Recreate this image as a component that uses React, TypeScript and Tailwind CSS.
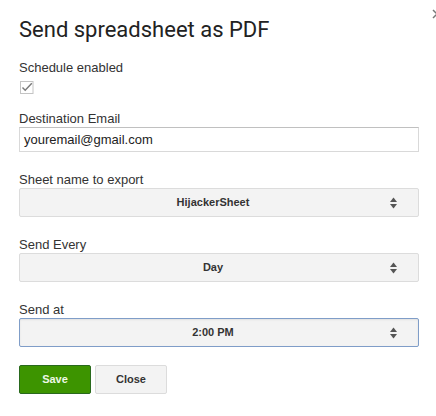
import React from "react";

function Arrows() {
  return (
    <svg width="7" height="12" viewBox="0 0 7 12" className="absolute right-[21px] top-1/2 -translate-y-1/2">
      <path d="M3.5 0.5 L7 5 L0 5 Z" fill="#555" />
      <path d="M0 7 L7 7 L3.5 11.5 Z" fill="#555" />
    </svg>
  );
}

function Select({ value, focused }: { value: string; focused?: boolean }) {
  return (
    <div
      className={
        focused
          ? "relative flex h-[29px] w-[400px] items-center justify-center rounded-[2px] border border-[#7f9dc8] bg-[#f3f3f3] pr-[12px] text-[11px] font-bold text-[#333] shadow-[inset_0_1px_2px_rgba(0,0,0,0.08)]"
          : "relative flex h-[29px] w-[400px] items-center justify-center rounded-[2px] border border-[#dcdcdc] bg-[#f3f3f3] pr-[12px] text-[11px] font-bold text-[#333]"
      }
    >
      <span>{value}</span>
      <Arrows />
    </div>
  );
}

export default function App() {
  return (
    <div className="relative h-[416px] w-[436px] overflow-hidden bg-white pl-[19px] pt-[17px] font-['Liberation_Sans',Arial,sans-serif] text-[13px] text-[#333]">
      <h1 className="font-['Roboto',Arial,sans-serif] text-[22px] font-normal leading-[26px] text-[#222]">
        Send spreadsheet as PDF
      </h1>

      <div className="mt-[17px] leading-[15px]">Schedule enabled</div>
      <div className="ml-[1px] mt-[6px] h-[12px] w-[14px]">
        <svg width="14" height="13" viewBox="0 0 14 13">
          <rect x="0.5" y="0.5" width="12.5" height="12" fill="#fff" stroke="#c4c4c4" />
          <path d="M2.5 6.5 L5.2 9.3 L11.8 2.2" fill="none" stroke="#7a7a7a" strokeWidth="1.4" />
        </svg>
      </div>

      <div className="mt-[18px] leading-[15px]">Destination Email</div>
      <div className="mt-[1px] flex h-[25px] w-[400px] items-center border border-[#d9d9d9] border-t-[#c0c0c0] pl-[4px] text-[13px] text-[#222]">
        youremail@gmail.com
      </div>

      <div className="mt-[20px] leading-[15px]">Sheet name to export</div>
      <div className="mt-[1px]">
        <Select value="HijackerSheet" />
      </div>

      <div className="mt-[20px] leading-[15px]">Send Every</div>
      <div className="mt-[1px]">
        <Select value="Day" />
      </div>

      <div className="mt-[20px] leading-[15px]">Send at</div>
      <div className="mt-[1px]">
        <Select value="2:00 PM" focused />
      </div>

      <div className="mt-[18px] flex gap-[4px]">
        <button className="h-[29px] w-[72px] rounded-[2px] border border-[#29691d] bg-[#3d9400] text-[11px] font-bold text-[#eef8e6]">
          Save
        </button>
        <button className="h-[29px] w-[72px] rounded-[2px] border border-[#dcdcdc] bg-[#f3f3f3] text-[11px] font-bold text-[#333]">
          Close
        </button>
      </div>

      <svg width="10" height="10" viewBox="0 0 10 10" className="absolute left-[432px] top-[9px]">
        <path d="M1 1 L9 9 M9 1 L1 9" stroke="#777" strokeWidth="1.5" />
      </svg>
    </div>
  );
}
